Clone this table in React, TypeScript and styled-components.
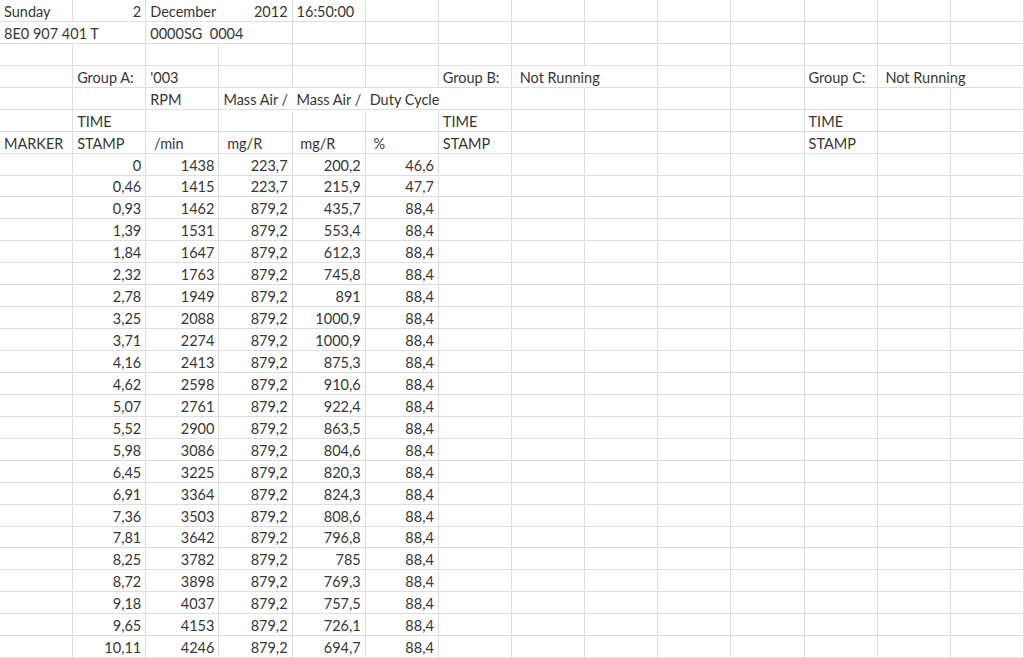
import React from "react";
import styled, { createGlobalStyle } from "styled-components";

const Global = createGlobalStyle`
  html, body { margin: 0; padding: 0; background: #ffffff; }
  body { width: 1024px; height: 658px; overflow: hidden; }
`;

const Sheet = styled.div`
  display: grid;
  grid-template-columns: repeat(14, minmax(0, 1fr));
  grid-auto-rows: 21.95px;
  width: 1024px;
  font-family: Lato, "Liberation Sans", sans-serif;
  font-size: 14.5px;
  color: #363636;
`;

const Cell = styled.div<{ $right?: boolean; $open?: boolean }>`
  min-width: 0;
  display: flex;
  align-items: flex-end;
  justify-content: ${(p) => (p.$right ? "flex-end" : "flex-start")};
  padding: 0 4px 0 4px;
  box-sizing: border-box;
  white-space: pre;
  overflow: visible;
  border-bottom: 1px solid #dedede;
  border-right: 1px solid ${(p) => (p.$open ? "transparent" : "#dedede")};
  line-height: 18px;
`;

type C = { t?: string; r?: boolean; o?: boolean };
const E: C = {};

const header: C[][] = [
  [{ t: "Sunday" }, { t: "2", r: true }, { t: "December", o: true }, { t: "2012", r: true }, { t: "16:50:00" }],
  [{ t: "8E0 907 401 T", o: true }, E, { t: "0000SG  0004", o: true }],
  [],
  [E, { t: "Group A:" }, { t: "'003" }, E, E, E, { t: "Group B:" }, { t: " Not Running", o: true }, E, E, E, { t: "Group C:" }, { t: " Not Running", o: true }],
  [E, E, { t: "RPM" }, { t: "Mass Air /", o: true }, { t: "Mass Air /", o: true }, { t: "Duty Cycle", o: true }],
  [E, { t: "TIME" }, E, E, E, E, { t: "TIME" }, E, E, E, E, { t: "TIME" }],
  [{ t: "MARKER" }, { t: "STAMP" }, { t: " /min" }, { t: " mg/R" }, { t: " mg/R" }, { t: " %" }, { t: "STAMP" }, E, E, E, E, { t: "STAMP" }],
];

const data: string[][] = [
  ["0", "1438", "223,7", "200,2", "46,6"],
  ["0,46", "1415", "223,7", "215,9", "47,7"],
  ["0,93", "1462", "879,2", "435,7", "88,4"],
  ["1,39", "1531", "879,2", "553,4", "88,4"],
  ["1,84", "1647", "879,2", "612,3", "88,4"],
  ["2,32", "1763", "879,2", "745,8", "88,4"],
  ["2,78", "1949", "879,2", "891", "88,4"],
  ["3,25", "2088", "879,2", "1000,9", "88,4"],
  ["3,71", "2274", "879,2", "1000,9", "88,4"],
  ["4,16", "2413", "879,2", "875,3", "88,4"],
  ["4,62", "2598", "879,2", "910,6", "88,4"],
  ["5,07", "2761", "879,2", "922,4", "88,4"],
  ["5,52", "2900", "879,2", "863,5", "88,4"],
  ["5,98", "3086", "879,2", "804,6", "88,4"],
  ["6,45", "3225", "879,2", "820,3", "88,4"],
  ["6,91", "3364", "879,2", "824,3", "88,4"],
  ["7,36", "3503", "879,2", "808,6", "88,4"],
  ["7,81", "3642", "879,2", "796,8", "88,4"],
  ["8,25", "3782", "879,2", "785", "88,4"],
  ["8,72", "3898", "879,2", "769,3", "88,4"],
  ["9,18", "4037", "879,2", "757,5", "88,4"],
  ["9,65", "4153", "879,2", "726,1", "88,4"],
  ["10,11", "4246", "879,2", "694,7", "88,4"],
];

const rows: C[][] = [
  ...header,
  ...data.map((d) => [E, ...d.map((t) => ({ t, r: true }))]),
];

export default function App() {
  return (
    <>
      <Global />
      <Sheet>
        {rows.map((row, ri) =>
          Array.from({ length: 14 }, (_, ci) => {
            const c = row[ci] || E;
            return (
              <Cell key={`${ri}-${ci}`} $right={c.r} $open={c.o}>
                {c.t}
              </Cell>
            );
          })
        )}
      </Sheet>
    </>
  );
}
